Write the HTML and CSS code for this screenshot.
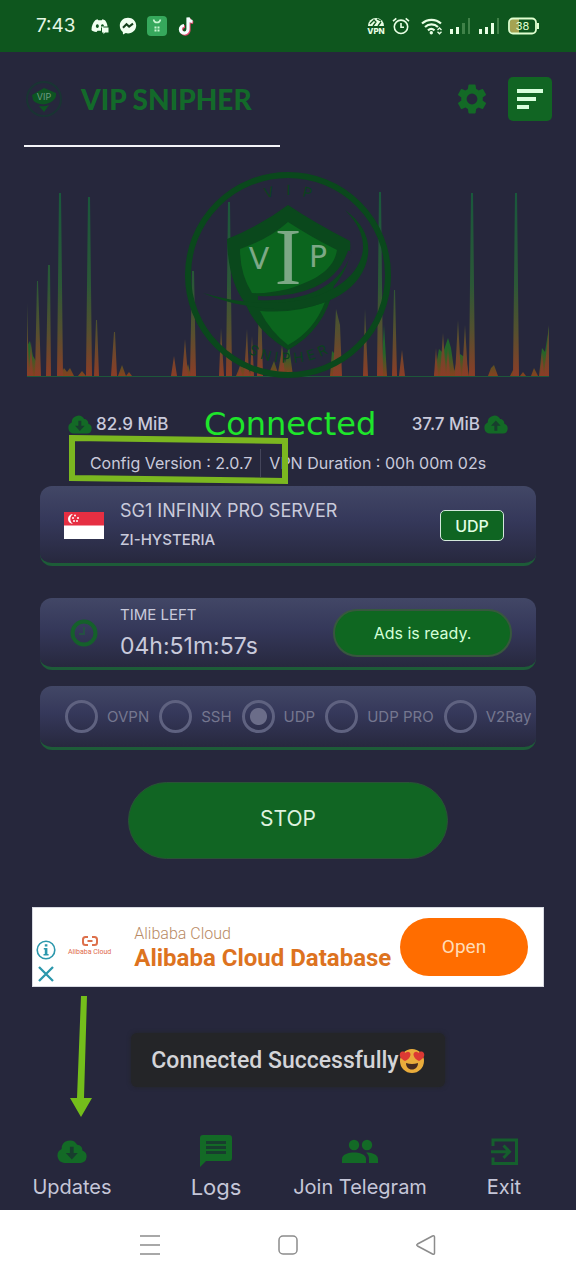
FILE: index.html
```html
<!DOCTYPE html>
<html lang="en">
<head>
<meta charset="utf-8">
<meta name="viewport" content="width=device-width, initial-scale=1">
<title>VIP Snipher</title>
<link rel="stylesheet" href="styles.css">
</head>
<body>
<svg class="defs" aria-hidden="true">
  <defs>
    <symbol id="cloud-down" viewBox="0 0 29 22">
      <path fill="#136a26" d="M7 22a7 7 0 0 1-2.500-13.300A8 8 0 0 1 19.500 4.500a5 5 0 0 1 5 5.500A6.200 6.200 0 0 1 23 22z"/>
      <path fill="#183d2e" d="M12.500 6.500v6H8.500l5.800 6.300 5.800-6.300h-4v-6z"/>
    </symbol>
    <symbol id="cloud-up" viewBox="0 0 29 22">
      <path fill="#136a26" d="M7 22a7 7 0 0 1-2.500-13.300A8 8 0 0 1 19.500 4.500a5 5 0 0 1 5 5.500A6.200 6.200 0 0 1 23 22z"/>
      <path fill="#183d2e" d="M12.500 18.500v-6H8.500l5.800-6.300 5.800 6.300h-4v6z"/>
    </symbol>
  </defs>
</svg>

<div class="status-bar">
  <div class="status-left">
    <time class="clock">7:43</time>
    <svg width="18" height="18" viewBox="0 0 18 18" aria-label="Discord"><path fill="#f0fff0" fill-rule="evenodd" d="M4.500 3l2-.7.8 1h3.400l.8-1 2.500.9c1.300 1.500 2.300 3.600 2.600 6.300H10v4.200H6.500l-1 1.300C3 14.700 1 14 .5 13 .5 9 2 5.500 4.500 3zM6.300 7.300a1.500 1.800 0 1 0 .1 0zM11.400 7.300a1.500 1.800 0 1 0 .1 0z"/><path fill="#f0fff0" d="M11 10.500h6.500v5h-3.500l-1.500 1.700v-1.700H11z"/></svg>
    <svg width="18" height="18" viewBox="0 0 18 18" aria-label="Messenger"><path fill="#f0fff0" d="M9 .8c4.700 0 8.200 3.400 8.200 7.800S13.700 16.400 9 16.400l-2.200-.3-2.800 1.300-.2-2.400C1.900 13.500.8 11.300.8 8.600.8 4.200 4.300.8 9 .8z"/><path fill="none" stroke="#14401c" stroke-width="2" d="M4 10.800l3.500-3.600 2.600 2.400 3.900-3"/></svg>
    <svg width="20" height="20" viewBox="0 0 20 20" aria-label="Store"><rect width="20" height="20" rx="4" fill="#36a85c"/><path fill="none" stroke="#c8f5d0" stroke-width="1.500" d="M6.500 3.500c.8 4 6.200 4 7 0"/><path fill="#c8f5d0" d="M7.500 10.500h2v2h-2zm3 0h2v2h-2zm-3 3h2v2h-2zm3 0h2v2h-2z"/></svg>
    <svg width="17" height="20" viewBox="0 0 17 20" aria-label="TikTok"><g fill="none" stroke-width="3.200"><path stroke="#e2466b" d="M8 10.500a3.800 3.800 0 1 0 4 3.800V2.500c.4 2.400 2 3.800 4.200 4"/><path stroke="#f5ffff" d="M7 9.500a3.800 3.800 0 1 0 4 3.800V1.500c.4 2.400 2 3.800 4.500 4"/></g></svg>
  </div>
  <div class="status-right">
    <svg width="18" height="18" viewBox="0 0 18 18" aria-label="VPN"><path fill="#e8ffe4" d="M1 9a8 8 0 0 1 16 0z"/><path fill="none" stroke="#0e561e" stroke-width="1.300" d="M3 7l4-4 2 2-3 4M11 9l3-4M10 2l4 2"/><text x="9" y="17" text-anchor="middle" class="vpn-text">VPN</text></svg>
    <svg width="18" height="18" viewBox="0 0 18 18" aria-label="Alarm"><g fill="none" stroke="#e8ffe4" stroke-width="1.600"><circle cx="9" cy="9.800" r="6.700"/><path d="M9 6v4.200h3M1 4.200L4.300 1.300M17 4.200l-3.300-2.900"/></g></svg>
    <svg class="wifi" width="22" height="18" viewBox="0 0 22 18" aria-label="Wi-Fi"><g fill="none" stroke="#e8ffe4" stroke-width="2.200"><path d="M1 6.500a14 14 0 0 1 19 0M4 10a9.500 9.500 0 0 1 13 0M7 13.300a5 5 0 0 1 6.500 0"/><path stroke-width="1.300" d="M16.500 13l2-2 2 2M16.500 14.800l2 2 2-2"/></g><circle cx="10.300" cy="15.800" r="1.700" fill="#e8ffe4"/></svg>
    <svg width="20" height="18" viewBox="0 0 20 18" aria-label="Signal"><path fill="#e8ffe4" d="M0 12h3v5H0zm6-2h3v7H6z"/><path fill="#3f8148" d="M12 6h3v11h-3zm6-5h2.500v16H18z"/></svg>
    <svg class="sim" width="20" height="18" viewBox="0 0 20 18" aria-label="Signal"><path fill="#e8ffe4" d="M0 12h3v5H0zm6-2h3v7H6zm6-4h3v11h-3z"/><path fill="#3f8148" d="M18 1h2.500v16H18z"/></svg>
    <svg class="battery" width="32" height="18" viewBox="0 0 32 18" aria-label="Battery"><path fill="#a5a352" d="M5 2h6v14H5a3 3 0 0 1-3-3V5a3 3 0 0 1 3-3z"/><rect x="1" y="1.500" width="27" height="15" rx="4" fill="none" stroke="#e0ffd0" stroke-width="1.800"/><path fill="#e0ffd0" d="M29 6h2v6h-2z"/><text x="14.500" y="13" text-anchor="middle" class="battery-text">38</text></svg>
  </div>
</div>

<main class="app">
  <header class="header">
    <svg class="brand-logo" width="40" height="44" viewBox="0 0 40 44" aria-hidden="true"><circle cx="20" cy="22" r="17" fill="none" stroke="#193433" stroke-width="2"/><path fill="#0d5422" d="M8 18l12-7 12 5c1 5-3 9-10 11-6 1-11-1-13-4zM15 29q6 1 10-1l-5 7z"/><text x="20" y="23" text-anchor="middle" class="brand-vip">VIP</text></svg>
    <h1 class="brand">VIP SNIPHER</h1>
    <button class="icon-btn" aria-label="Settings"><svg width="36" height="36" viewBox="0 0 24 24"><path fill="#136a26" d="M19.140 12.940c.04-.3.060-.61.060-.94s-.02-.64-.07-.94l2.030-1.580a.49.49 0 0 0 .12-.61l-1.920-3.320a.49.49 0 0 0-.59-.22l-2.390.96a7 7 0 0 0-1.620-.94l-.36-2.540a.48.48 0 0 0-.48-.41h-3.840a.48.48 0 0 0-.47.410l-.36 2.540a7.400 7.400 0 0 0-1.620.94l-2.390-.96a.48.48 0 0 0-.59.22L2.740 8.870a.48.48 0 0 0 .12.610l2.030 1.580a7 7 0 0 0 0 1.880l-2.030 1.580a.49.49 0 0 0-.12.610l1.920 3.320c.12.22.37.29.59.22l2.390-.96c.5.38 1.030.7 1.620.94l.36 2.540c.05.24.24.41.48.41h3.840c.24 0 .44-.17.470-.41l.36-2.540a7 7 0 0 0 1.620-.94l2.390.96c.22.080.47 0 .59-.22l1.920-3.320a.48.48 0 0 0-.12-.61zM12 15.600a3.600 3.600 0 1 1 0-7.200 3.600 3.600 0 0 1 0 7.200z"/></svg></button>
    <button class="menu-btn" aria-label="Menu"><svg width="26" height="20" viewBox="0 0 26 20"><path fill="#d8ffdc" d="M0 0h26v4H0zm0 8h19v4H0zm0 8h12v4H0z"/></svg></button>
  </header>
  <hr class="rule">

  <svg class="visual" viewBox="0 0 576 220" aria-label="VIP Snipher traffic">
    <defs>
      <linearGradient id="spike" gradientUnits="userSpaceOnUse" x1="0" y1="32" x2="0" y2="216"><stop offset="0" stop-color="#19583c"/><stop offset=".5" stop-color="#2b5837"/><stop offset=".75" stop-color="#53502f"/><stop offset="1" stop-color="#8b3d27"/></linearGradient>
      <linearGradient id="grass" gradientUnits="userSpaceOnUse" x1="0" y1="150" x2="0" y2="216"><stop offset="0" stop-color="#126638"/><stop offset=".65" stop-color="#256528"/><stop offset="1" stop-color="#87401f"/></linearGradient>
      <path id="arc-top" d="M208 115a80 80 0 0 1 160 0"/>
      <path id="arc-bottom" d="M200 115a88 88 0 0 0 176 0"/>
    </defs>
    <path fill="url(#grass)" d="M27 216v-30l3-5 3 15 3 5 3 15zM60 216l4-8 3 4 3-4 4 8zM78 216l4-5 4 5zM118 216l4-11 4 11zM126 216l3-4 3 4zM184 216l4-12 3 12zM236 216l4-10 5 2 3-2 3 10zM268 216l6-15 4 12 4-25 3 15 4-17 4 30zM330 216l2-25 4 4 2-25 3 46zM381 216l3-51 3 51zM434 216l5-27 4 4 5-15 3 10 4 28zM453 216l3-12 4-10 6 4 3 18zM488 216l3-8 3-3 4 11zM510 216l3-6 3 6zM520 216l3-4 3 4zM531 216l3-8 4 8zM539 216l3-28 3 4 4-25v49z"/>
    <path fill="url(#spike)" d="M27 216v-73l2 73zM29 216l2-34 2 34zM35 216l2-95h1l3 95zM46 216l2-111h2l1 111zM57 216l2-183h2l2 183zM86 216l2-179h2l2 179zM94 216l2-56h1l2 56zM111 216l3-44h1l2 44zM171 216l3-20 3 20zM182 216l3-37 3 37zM190 216l2-105h2l2 105zM219 216l2-48 3 48zM226 216l2-174h2l2 174zM238 216l2-10 2 10zM244 216l3-47 2 47zM250 216l2-40 2 40zM257 216l2-74h2l2 74zM279 216l3-31 3 31zM333 216l3-67 4 16 2 51zM363 216l2-67 3 67zM377 216l2-184h2l2 184zM392 216l2-86h1l2 86zM399 216l3-26 3 26zM434 216l2-28 2 28zM440 216l3-43 3 43zM446 216l2-28 2 28zM455 216l3-56 3 56zM462 216l3-51 3 51zM469 216l2-183h2l2 183zM513 216l2-183h2l2 183zM540 216l2-24 2 24zM544 216l5-51v51z"/>
    <path stroke="#1d573a" d="M27 216.500h522"/>
    <circle cx="288" cy="115" r="100" fill="none" stroke="#0a481c" stroke-width="6"/>
    <path fill="#0a481c" d="M227 79q33-13 61-34 27 18 62 36c2 16-5 32-16 45q-9 44-46 64-31-18-43-47-17-22-18-64z"/>
    <path fill="#0b651e" d="M240 89q29-10 48-27 23 15 49 28c-3 19-20 30-49 39q-21 5-36 4-12-19-12-44zM260 151q36 3 65-9-11 29-37 43-18-14-28-34z"/>
    <path fill="none" stroke="#26273c" stroke-width="4" d="M258 138c42 2 80-10 92-47"/>
    <path fill="#0a481c" d="M203 133c32 9 57 11 84 9 46-4 74-28 76-53q1-20-18-39 26 19 23 45c-5 36-45 57-94 54-28-2-50-7-71-16z"/>
    <g class="emblem-text" text-anchor="middle">
      <text class="emblem-letter" x="259" y="109">V</text>
      <text class="emblem-i" x="288" y="124">I</text>
      <text class="emblem-letter" x="318" y="107">P</text>
    </g>
    <text class="ring-text" text-anchor="middle"><textPath href="#arc-top" startOffset="50%">V &#160; I &#160; P</textPath></text>
    <text class="ring-text" text-anchor="middle"><textPath href="#arc-bottom" startOffset="50%">S N I P H E R</textPath></text>
  </svg>

  <section class="stats">
    <div class="stat"><svg width="24" height="19"><use href="#cloud-down"/></svg><span>82.9 MiB</span></div>
    <strong class="state">Connected</strong>
    <div class="stat"><span>37.7 MiB</span><svg width="24" height="19"><use href="#cloud-up"/></svg></div>
  </section>
  <section class="info">
    <span>Config Version : 2.0.7</span>
    <i class="divider"></i>
    <span>VPN Duration : 00h 00m 02s</span>
    <svg class="highlight" width="220" height="52" viewBox="0 0 220 52" aria-hidden="true"><path fill="none" stroke="#7bb720" stroke-width="6" d="M4 4l213 3v40L4 44z"/></svg>
  </section>

  <section class="card server">
    <svg class="flag" width="40" height="27" viewBox="0 0 40 27" aria-label="Singapore"><path fill="#fff" d="M0 0h40v27H0z"/><path fill="#e62f42" d="M0 0h40v13.500H0z"/><path fill="#fff" d="M9 2a5 5 0 1 0 0 10 6 6 0 0 1 0-10z"/><g fill="#fff"><circle cx="11" cy="3.500" r="1"/><circle cx="9" cy="6" r="1"/><circle cx="14" cy="6" r="1"/><circle cx="10" cy="9" r="1"/><circle cx="13" cy="9" r="1"/></g></svg>
    <div class="card-text">
      <span class="server-name">SG1 INFINIX PRO SERVER</span>
      <span class="server-type">ZI-HYSTERIA</span>
    </div>
    <button class="badge">UDP</button>
  </section>

  <section class="card time">
    <svg class="time-icon" width="40" height="28" viewBox="0 0 40 28" aria-hidden="true"><circle cx="20" cy="14" r="11.500" fill="none" stroke="#15602b" stroke-width="4"/><path fill="none" stroke="#255044" stroke-width="2" d="M20 8v7h-5"/></svg>
    <div class="card-text">
      <span class="time-label">TIME LEFT</span>
      <span class="time-value">04h:51m:57s</span>
    </div>
    <button class="ads">Ads is ready.</button>
  </section>

  <fieldset class="card modes" aria-label="Protocol">
    <label class="mode"><input type="radio" name="mode" disabled>OVPN</label>
    <label class="mode"><input type="radio" name="mode" disabled>SSH</label>
    <label class="mode"><input type="radio" name="mode" checked disabled>UDP</label>
    <label class="mode"><input type="radio" name="mode" disabled>UDP PRO</label>
    <label class="mode"><input type="radio" name="mode" disabled>V2Ray</label>
  </fieldset>

  <button class="stop">STOP</button>

  <aside class="ad">
    <div class="ad-controls">
      <svg width="20" height="20" viewBox="0 0 20 20" aria-label="Ad info"><circle cx="10" cy="10" r="8.800" fill="none" stroke="#2b97ac" stroke-width="1.600"/><path fill="#2b97ac" d="M8.800 4.300h2.600v2.200H8.800zM7.800 8h3.600v6h1.200v1.500H7.500V14h1.300V9.500h-1z"/></svg>
      <svg width="20" height="20" viewBox="0 0 20 20" aria-label="Close ad"><path stroke="#2b97ac" stroke-width="2.300" d="M3 3l14 14M17 3L3 17"/></svg>
    </div>
    <div class="ad-logo">
      <svg width="16" height="10" viewBox="0 0 16 10" aria-hidden="true"><path fill="none" stroke="#dd704b" stroke-width="2" d="M6 1H3.500Q1 1 1 3.500v3Q1 9 3.500 9H6M10 1h2.500Q15 1 15 3.500v3Q15 9 12.500 9H10M5.500 5h5"/></svg>
      <span>Alibaba Cloud</span>
    </div>
    <div class="ad-text">
      <span class="ad-brand">Alibaba Cloud</span>
      <span class="ad-title">Alibaba Cloud Database</span>
    </div>
    <button class="ad-open">Open</button>
  </aside>

  <div class="toast-area">
    <svg class="arrow" width="26" height="124" viewBox="0 0 26 124" aria-hidden="true"><path fill="#74be1b" d="M12 1h6l-3 102h8l-11 19L1 103h7z"/></svg>
    <div class="toast" role="status">Connected Successfully<svg width="26" height="26" viewBox="0 0 26 26" aria-label="heart eyes"><circle cx="13" cy="13" r="12" fill="#e9ac3b"/><path fill="#dc3934" d="M6 13C2 11 0 8 1 5.500S5 3 6.500 5C8.500 2.500 12 4 11.500 7 11 10 8.500 12 6 13zM20 13c-2.500-1-5-3-5.500-6s3-4.500 5-2C21 3 24 3 25 5.500S24 11 20 13z"/><path fill="#442a21" d="M7 15q6 2 12 0c0 4-2.500 6.500-6 6.500S7 19 7 15z"/></svg></div>
  </div>

  <nav class="tabs">
    <a href="#updates" class="tab"><svg width="30" height="23"><use href="#cloud-down"/></svg><span>Updates</span></a>
    <a href="#logs" class="tab tab-large"><svg width="32" height="32" viewBox="0 0 32 32"><path fill="#136a26" d="M3 0h26q3 0 3 3v20q0 3-3 3H6l-6 6V3q0-3 3-3z"/><path fill="#183d2e" d="M6 6h20v3H6zm0 5h20v3H6zm0 5h20v3H6z"/></svg><span>Logs</span></a>
    <a href="#telegram" class="tab"><svg width="36" height="24" viewBox="0 0 36 24"><g fill="#136a26"><circle cx="12" cy="6" r="5.200"/><circle cx="25" cy="6" r="5.200"/><path d="M0 24v-4c0-5 7-6.500 12-6.500S24 15 24 20v4zM24 13.500c5 0 12 1.500 12 6.500v4h-9v-4c0-3-1-5-3-6.500z"/></g></svg><span>Join Telegram</span></a>
    <a href="#exit" class="tab"><svg width="27" height="27" viewBox="0 0 27 27"><path fill="none" stroke="#155f2d" stroke-width="3" d="M2 8V2h23.500v23.500H2v-6M0 13.700h17M12.500 7.500l6 6.200-6 6.200"/></svg><span>Exit</span></a>
  </nav>
</main>

<div class="system-nav">
  <button aria-label="Recent apps"><svg width="22" height="22" viewBox="0 0 22 22"><path stroke="#8c8c8c" stroke-width="1.500" d="M1 2h20M1 11h20M1 20h20"/></svg></button>
  <button aria-label="Home"><svg width="22" height="22" viewBox="0 0 22 22"><rect x="2" y="2" width="18" height="18" rx="4" fill="none" stroke="#8c8c8c" stroke-width="1.500"/></svg></button>
  <button aria-label="Back"><svg width="22" height="22" viewBox="0 0 22 22"><path fill="none" stroke="#8c8c8c" stroke-width="1.500" stroke-linejoin="round" d="M2.500 10L17.500 2q2-.8 2 1v16q0 1.800-2 1L2.500 12q-1.500-1 0-2z"/></svg></button>
</div>
</body>
</html>
```
FILE: styles.css
```css
* {
  box-sizing: border-box;
}

body {
  margin: 0;
  min-height: 100vh;
  display: flex;
  flex-direction: column;
  background: #26273c;
  color: #c9cadb;
  font-family: Inter, "Noto Sans", sans-serif;
  font-size: 16px;
  line-height: 24px;
}

button {
  margin: 0;
  padding: 0;
  border: 0;
  background: none;
  color: inherit;
  font: inherit;
  cursor: pointer;
}

svg {
  display: block;
  flex: none;
}

.defs {
  position: absolute;
  width: 0;
  height: 0;
}

/* Status bar */
.status-bar {
  display: flex;
  align-items: center;
  justify-content: space-between;
  height: 52px;
  padding: 0 36px;
  background: #0e561e;
}

.status-left,
.status-right {
  display: flex;
  align-items: center;
  gap: 10px;
}

.status-right {
  gap: 7px;
}

.wifi {
  margin-left: 4px;
}

.sim,
.battery {
  margin-left: 2px;
}

.clock {
  margin-right: 5px;
  color: #e4f7e4;
  font-size: 19px;
}

.vpn-text {
  fill: #e8ffe4;
  font-size: 8px;
  font-weight: 800;
}

.battery-text {
  fill: #e0ffd0;
  font-size: 11px;
}

/* Header */
.app {
  flex: 1;
  display: flex;
  flex-direction: column;
}

.header {
  display: flex;
  align-items: center;
  padding: 25px 24px 24px;
}

.brand {
  flex: 1;
  margin: 0 0 0 17px;
  color: #136a2a;
  font-family: Lato, sans-serif;
  font-size: 28px;
  font-weight: 900;
  line-height: 44px;
}

.brand-vip {
  fill: #6f9c83;
  font-size: 9px;
}

.menu-btn {
  display: grid;
  place-items: center;
  width: 44px;
  height: 44px;
  margin-left: 18px;
  border-radius: 5px;
  background: #116523;
}

.rule {
  width: calc(50% - 32px);
  height: 2px;
  margin: 0 0 13px 24px;
  border: 0;
  background: #f4f4f8;
}

/* Emblem and traffic graph */
.visual {
  width: 100%;
  height: auto;
}

.emblem-text {
  fill: #7da886;
}

.emblem-letter {
  font-family: "DejaVu Sans", sans-serif;
  font-size: 30px;
}

.emblem-i {
  font-family: "Liberation Serif", serif;
  font-size: 80px;
}

.ring-text {
  fill: #0a421c;
  font-size: 14px;
}

/* Connection state */
.stats {
  display: flex;
  align-items: center;
  justify-content: space-between;
  height: 40px;
  margin-top: 24px;
  padding: 0 68px;
}

.stat {
  display: flex;
  align-items: center;
  gap: 4px;
  font-size: 17px;
  font-weight: 500;
}

.state {
  color: #1ee52b;
  font-family: "DejaVu Sans", sans-serif;
  font-size: 32px;
  font-weight: 400;
}

.info {
  position: relative;
  display: flex;
  align-items: center;
  justify-content: center;
  gap: 8px;
  height: 38px;
  margin-bottom: 4px;
}

.divider {
  width: 1px;
  height: 28px;
  background: #44455a;
}

.highlight {
  position: absolute;
  top: -10px;
  right: 50%;
}

/* Cards */
.card {
  display: flex;
  align-items: center;
  margin: 0 40px;
  border: 0;
  border-bottom: 3px solid #1d5c38;
  border-radius: 12px;
  background: linear-gradient(#424766, #35385a 45%, #27283e);
}

.card-text {
  flex: 1;
  display: flex;
  flex-direction: column;
  margin-left: 16px;
}

.server {
  height: 80px;
  padding: 2px 32px 0 24px;
}

.server-name {
  font-size: 18px;
  line-height: 28px;
}

.server-type {
  font-size: 15px;
  font-weight: 500;
  line-height: 30px;
}

.badge {
  width: 64px;
  height: 31px;
  border: 1px solid #d4e8dc;
  border-radius: 5px;
  background: #0f6522;
  color: #e2ffe4;
  font-weight: 500;
}

.time {
  height: 72px;
  margin-top: 32px;
  padding: 0 24px;
}

.time-label {
  font-size: 15px;
  line-height: 28px;
}

.time-value {
  padding-bottom: 2px;
  font-size: 23px;
  line-height: 34px;
}

.ads {
  width: 179px;
  height: 48px;
  border: 2px solid #37583e;
  border-radius: 24px;
  background: #0f6721;
  color: #d4ffd8;
}

.modes {
  gap: 10px;
  height: 64px;
  min-width: 0;
  margin-top: 16px;
  padding: 0 0 0 25px;
  overflow: hidden;
}

.mode {
  display: flex;
  align-items: center;
  gap: 9px;
  color: #75778f;
  font-size: 15px;
  white-space: nowrap;
}

.mode input {
  appearance: none;
  flex: none;
  width: 33px;
  height: 33px;
  margin: 0;
  border: 3px solid #5f6280;
  border-radius: 50%;
}

.mode input:checked {
  background: radial-gradient(circle, #6b6d89 8px, transparent 9px);
}

.stop {
  align-self: center;
  width: calc(100% - 256px);
  height: 77px;
  margin-top: 32px;
  padding-bottom: 4px;
  border: 1px solid #2a5237;
  border-radius: 39px;
  background: #116523;
  color: #dff2df;
  font-size: 21px;
}

/* Advertisement */
.ad {
  display: flex;
  align-items: center;
  height: 80px;
  margin: 48px 32px 0;
  padding: 0 15px 0 3px;
  border: 1px solid #d8dae2;
  background: #fff;
  font-family: Roboto, sans-serif;
}

.ad-controls {
  align-self: flex-end;
  display: grid;
  gap: 4px;
  margin-bottom: 2px;
}

.ad-logo {
  display: grid;
  justify-items: center;
  margin-left: 12px;
  color: #e06a4a;
  font-size: 7px;
  line-height: 12px;
}

.ad-text {
  flex: 1;
  display: grid;
  margin-left: 23px;
  padding-bottom: 2px;
  white-space: nowrap;
}

.ad-brand {
  color: #b88a64;
  font-weight: 300;
}

.ad-title {
  color: #dd731f;
  font-size: 24px;
  font-weight: 700;
}

.ad-open {
  width: 128px;
  height: 58px;
  border-radius: 29px;
  background: #ff6d00;
  color: #ffdcb8;
  font-size: 19px;
}

/* Toast */
.toast-area {
  position: relative;
  display: flex;
  justify-content: center;
  padding-top: 46px;
}

.arrow {
  position: absolute;
  top: 8px;
  left: 69px;
}

.toast {
  display: flex;
  align-items: center;
  height: 54px;
  padding: 2px 20px 0;
  border-radius: 6px;
  background: #242528;
  box-shadow: 0 0 4px #242528;
  color: #d3d4d8;
  font-family: Roboto, sans-serif;
  font-size: 23px;
  font-weight: 500;
}

/* Bottom tabs */
.tabs {
  display: grid;
  grid-template-columns: repeat(4, 1fr);
  margin-top: auto;
  padding-bottom: 7px;
}

.tab {
  display: grid;
  grid-template-rows: 40px 32px;
  place-items: center;
  color: #c5c6d8;
  font-size: 20px;
  line-height: 32px;
  text-decoration: none;
  white-space: nowrap;
}

.tab-large {
  font-size: 22px;
}

/* System navigation */
.system-nav {
  display: flex;
  align-items: center;
  justify-content: center;
  gap: 116px;
  height: 70px;
  background: #fff;
}
```
